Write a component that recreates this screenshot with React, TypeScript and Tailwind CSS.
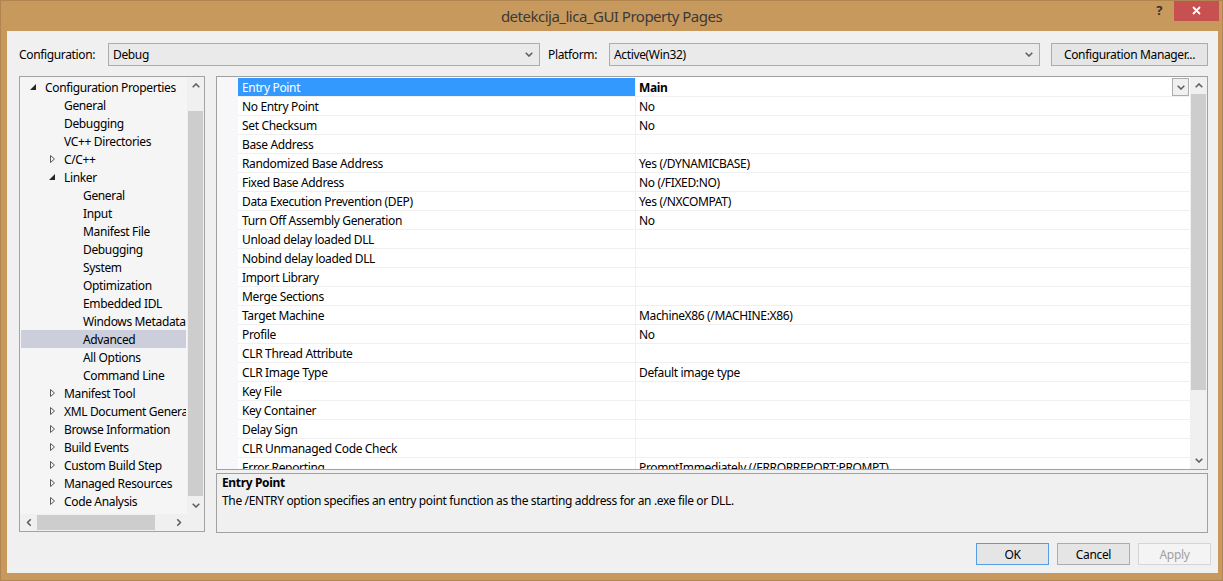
const treeItems = [
  { level: 0, label: 'Configuration Properties', node: 'open' },
  { level: 1, label: 'General' },
  { level: 1, label: 'Debugging' },
  { level: 1, label: 'VC++ Directories' },
  { level: 1, label: 'C/C++', node: 'closed' },
  { level: 1, label: 'Linker', node: 'open' },
  { level: 2, label: 'General' },
  { level: 2, label: 'Input' },
  { level: 2, label: 'Manifest File' },
  { level: 2, label: 'Debugging' },
  { level: 2, label: 'System' },
  { level: 2, label: 'Optimization' },
  { level: 2, label: 'Embedded IDL' },
  { level: 2, label: 'Windows Metadata' },
  { level: 2, label: 'Advanced', selected: true },
  { level: 2, label: 'All Options' },
  { level: 2, label: 'Command Line' },
  { level: 1, label: 'Manifest Tool', node: 'closed' },
  { level: 1, label: 'XML Document Generator', node: 'closed' },
  { level: 1, label: 'Browse Information', node: 'closed' },
  { level: 1, label: 'Build Events', node: 'closed' },
  { level: 1, label: 'Custom Build Step', node: 'closed' },
  { level: 1, label: 'Managed Resources', node: 'closed' },
  { level: 1, label: 'Code Analysis', node: 'closed' },
]

const indent = ['w-[8px]', 'w-[27px]', 'w-[46px]']

const props: [string, string][] = [
  ['Entry Point', 'Main'],
  ['No Entry Point', 'No'],
  ['Set Checksum', 'No'],
  ['Base Address', ''],
  ['Randomized Base Address', 'Yes (/DYNAMICBASE)'],
  ['Fixed Base Address', 'No (/FIXED:NO)'],
  ['Data Execution Prevention (DEP)', 'Yes (/NXCOMPAT)'],
  ['Turn Off Assembly Generation', 'No'],
  ['Unload delay loaded DLL', ''],
  ['Nobind delay loaded DLL', ''],
  ['Import Library', ''],
  ['Merge Sections', ''],
  ['Target Machine', 'MachineX86 (/MACHINE:X86)'],
  ['Profile', 'No'],
  ['CLR Thread Attribute', ''],
  ['CLR Image Type', 'Default image type'],
  ['Key File', ''],
  ['Key Container', ''],
  ['Delay Sign', ''],
  ['CLR Unmanaged Code Check', ''],
  ['Error Reporting', 'PromptImmediately (/ERRORREPORT:PROMPT)'],
]

// small "v" arrow used by combos and scrollbars
function Chevron({ dir = 'down' }: { dir?: 'down' | 'up' | 'left' | 'right' }) {
  const rot = { down: '', up: 'rotate-180', left: 'rotate-90', right: '-rotate-90' }[dir]
  return (
    <svg width="8" height="5" viewBox="0 0 8 5" className={rot} aria-hidden="true">
      <path d="M0.7 0.7 L4 4 L7.3 0.7" fill="none" stroke="#606060" strokeWidth="1.6" />
    </svg>
  )
}

function NodeGlyph({ node }: { node?: string }) {
  if (node === 'open')
    return (
      <svg width="16" height="18" viewBox="0 0 16 18" aria-hidden="true">
        <polygon points="7,6 7,12 1,12" fill="#262626" />
      </svg>
    )
  if (node === 'closed')
    return (
      <svg width="16" height="18" viewBox="0 0 16 18" aria-hidden="true">
        <polygon points="2.5,5.5 6.5,9 2.5,12.5" fill="none" stroke="#595959" strokeWidth="1" />
      </svg>
    )
  return <span className="w-[16px]" />
}

function Combo({ value, width }: { value: string; width: string }) {
  return (
    <div className={`${width} h-[23px] flex items-center justify-between border border-[#ACACAC] bg-[#EAEAEA] pl-[4px] pr-[6px]`}>
      <span className="pt-[1px]">{value}</span>
      <Chevron />
    </div>
  )
}

export default function App() {
  return (
    <div className="w-[1223px] h-[581px] bg-[#C8995C] border border-[#B08550] flex flex-col font-['Noto_Sans',sans-serif] text-[12px] tracking-[-0.35px] text-black leading-none overflow-hidden">
      <div className="relative h-[30px] shrink-0 flex items-center justify-center text-[15px] tracking-[-0.5px] text-[#3A3A3A]">
        detekcija_lica_GUI Property Pages
        <div className="absolute right-[3px] top-[-1px] flex items-start">
          <span className="mt-[4px] mr-[12px] text-[13px] font-bold text-[#333]">?</span>
          <div className="w-[45px] h-[21px] bg-[#C75050] flex items-center justify-center">
            <svg width="9" height="9" viewBox="0 0 9 9" aria-hidden="true">
              <path d="M1 1 L8 8 M8 1 L1 8" stroke="#fff" strokeWidth="1.8" />
            </svg>
          </div>
        </div>
      </div>

      <div className="ml-[6px] w-[1211px] h-[542px] bg-[#F0F0F0] flex flex-col pl-[12px] pr-[10px]">
        {/* configuration row */}
        <div className="mt-[12px] h-[23px] flex items-center">
          <span className="w-[89px] pt-[1px]">Configuration:</span>
          <Combo value="Debug" width="w-[432px]" />
          <span className="ml-[8px] w-[61px] pt-[1px]">Platform:</span>
          <Combo value="Active(Win32)" width="w-[431px]" />
          <button className="ml-[11px] w-[157px] h-[23px] pt-[1px] border border-[#ACACAC] bg-[#E5E5E5]">
            Configuration Manager...
          </button>
        </div>

        {/* main area */}
        <div className="mt-[10px] h-[457px] flex items-start">
          {/* tree */}
          <div className="w-[186px] h-[456px] border border-[#A3A3A3] bg-[#F5F5F5] flex flex-col">
            <div className="flex h-[437px]">
              <div className="w-[166px] pt-[1px] overflow-hidden">
                {treeItems.map((it, i) => (
                  <div
                    key={i}
                    className={`ml-[1px] h-[18px] flex items-center whitespace-nowrap ${it.selected ? 'bg-[#CCCEDB]' : ''}`}
                  >
                    <span className={`${indent[it.level]} shrink-0`} />
                    <span className="w-[16px] shrink-0 flex">
                      <NodeGlyph node={it.node} />
                    </span>
                    <span className="pt-[2px]">{it.label}</span>
                  </div>
                ))}
              </div>
              <div className="ml-auto w-[17px] bg-[#F0F0F0] flex flex-col items-center">
                <div className="h-[17px] flex items-center justify-center">
                  <Chevron dir="up" />
                </div>
                <div className="mt-[17px] w-[15px] h-[385px] bg-[#CDCDCD]" />
                <div className="flex-1 flex items-center justify-center">
                  <Chevron />
                </div>
              </div>
            </div>
            <div className="flex h-[17px] bg-[#F0F0F0]">
              <div className="w-[167px] flex items-center">
                <span className="w-[17px] flex justify-center">
                  <Chevron dir="left" />
                </span>
                <div className="w-[118px] h-[15px] bg-[#CDCDCD]" />
                <span className="ml-auto w-[17px] flex justify-center">
                  <Chevron dir="right" />
                </span>
              </div>
            </div>
          </div>

          {/* right column */}
          <div className="ml-[11px] w-[992px] flex flex-col">
            <div className="h-[394px] border border-[#A0A0A0] bg-white flex">
              <div className="w-[973px] flex">
                <div className="w-[21px] bg-[#F7F7F9]" />
                <div className="w-[952px] pt-[1px] overflow-hidden">
                  {props.map(([name, value], i) => (
                    <div key={i} className="h-[19px] flex border-b border-[#F0F0F0]">
                      <div
                        className={`w-[397px] pl-[4px] flex items-center whitespace-nowrap ${i === 0 ? 'bg-[#3399FF] text-white' : ''}`}
                      >
                        <span className="pt-[2px]">{name}</span>
                      </div>
                      <div className="flex-1 border-l border-[#F0F0F0] pl-[3px] flex items-center whitespace-nowrap">
                        <span className={`pt-[2px] ${i === 0 ? 'font-bold' : ''}`}>{value}</span>
                        {i === 0 && (
                          <div className="ml-auto mr-[1px] w-[17px] h-[18px] border border-[#ACACAC] bg-[#F0F0F0] flex items-center justify-center">
                            <Chevron />
                          </div>
                        )}
                      </div>
                    </div>
                  ))}
                </div>
              </div>
              <div className="w-[17px] bg-[#F0F0F0] flex flex-col items-center">
                <div className="h-[17px] flex items-center justify-center">
                  <Chevron dir="up" />
                </div>
                <div className="w-[15px] h-[296px] bg-[#CDCDCD]" />
                <div className="flex-1 flex items-end justify-center pb-[6px]">
                  <Chevron />
                </div>
              </div>
            </div>

            <div className="mt-[3px] h-[60px] border border-[#A0A0A0] bg-[#F0F0F0] pl-[5px]">
              <div className="h-[17px] leading-[18px] font-bold">Entry Point</div>
              <div className="leading-[20px]">
                The /ENTRY option specifies an entry point function as the starting address for an .exe file or DLL.
              </div>
            </div>
          </div>
        </div>

        {/* dialog buttons */}
        <div className="mt-[10px] -mr-[3px] flex justify-end gap-[8px]">
          <button className="w-[73px] h-[22px] pt-[1px] border border-[#569DE5] bg-[#E5E5E5]">OK</button>
          <button className="w-[73px] h-[22px] pt-[1px] border border-[#ACACAC] bg-[#E5E5E5]">Cancel</button>
          <button className="w-[73px] h-[22px] pt-[1px] border border-[#D5D5D5] bg-[#F4F4F4] text-[#A0A0A0]">Apply</button>
        </div>
      </div>
    </div>
  )
}
